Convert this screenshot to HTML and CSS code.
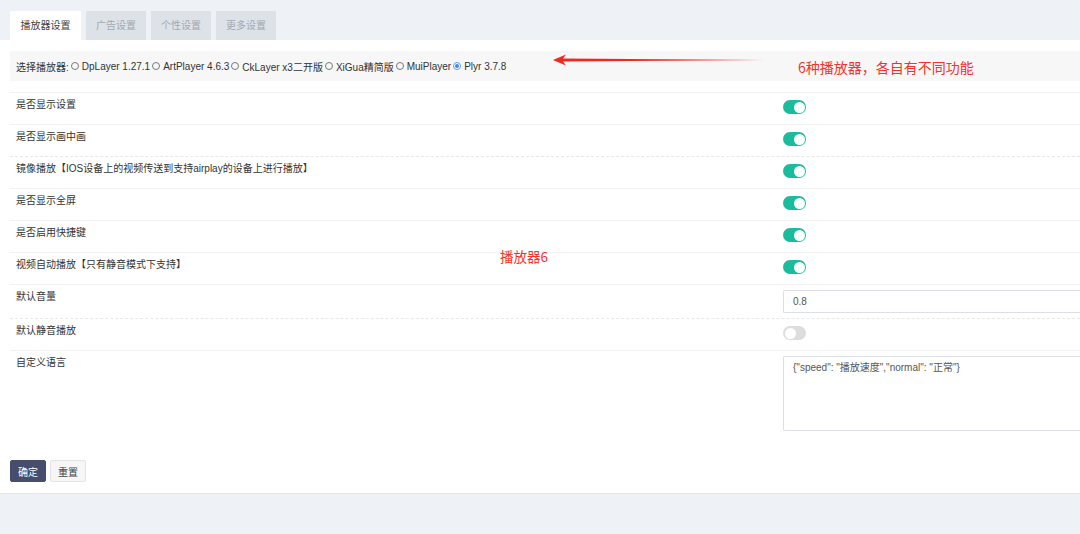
FILE: index.html
```html
<!DOCTYPE html>
<html lang="zh">
<head>
<meta charset="utf-8">
<title>播放器设置</title>
<link rel="stylesheet" href="styles.css">
</head>
<body>
<div class="page">
  <nav class="tabs">
    <div class="tab active">播放器设置</div>
    <div class="tab">广告设置</div>
    <div class="tab">个性设置</div>
    <div class="tab">更多设置</div>
  </nav>
  <main class="panel">
    <div class="player-row">
      <span>选择播放器:</span>
      <span class="opt"><i class="radio"></i>DpLayer 1.27.1</span>
      <span class="opt"><i class="radio"></i>ArtPlayer 4.6.3</span>
      <span class="opt"><i class="radio"></i>CkLayer x3二开版</span>
      <span class="opt"><i class="radio"></i>XiGua精简版</span>
      <span class="opt"><i class="radio"></i>MuiPlayer</span>
      <span class="opt"><i class="radio checked"></i>Plyr 3.7.8</span>
    </div>
    <div class="rows">
      <div class="row"><div class="label">是否显示设置</div><div class="ctrl"><span class="switch on"></span></div></div>
      <div class="row"><div class="label">是否显示画中画</div><div class="ctrl"><span class="switch on"></span></div></div>
      <div class="row dashed"><div class="label">镜像播放【IOS设备上的视频传送到支持airplay的设备上进行播放】</div><div class="ctrl"><span class="switch on"></span></div></div>
      <div class="row"><div class="label">是否显示全屏</div><div class="ctrl"><span class="switch on"></span></div></div>
      <div class="row"><div class="label">是否启用快捷键</div><div class="ctrl"><span class="switch on"></span></div></div>
      <div class="row"><div class="label">视频自动播放【只有静音模式下支持】</div><div class="ctrl"><span class="switch on"></span></div></div>
      <div class="row"><div class="label">默认音量</div><div class="ctrl"><div class="input">0.8</div></div></div>
      <div class="row dashed"><div class="label">默认静音播放</div><div class="ctrl"><span class="switch"></span></div></div>
      <div class="row last"><div class="label">自定义语言</div><div class="ctrl"><div class="textarea">{"speed": "播放速度","normal": "正常"}</div></div></div>
    </div>
    <div class="actions">
      <button class="btn primary">确定</button>
      <button class="btn">重置</button>
    </div>
    <svg class="arrow" width="226" height="12" viewBox="0 0 226 12">
      <polygon points="0,6 13,0.5 10,4.5 226,6 10,7.5 13,11.5" fill="#f0281e"/>
    </svg>
    <div class="note note-top">6种播放器，各自有不同功能</div>
    <div class="note note-mid">播放器6</div>
  </main>
</div>
</body>
</html>
```
FILE: styles.css
```css
html, body {
  margin: 0;
  padding: 0;
  overflow: hidden;
}
body {
  background: #eef1f5;
  font-family: "Liberation Sans", "Noto Sans CJK SC", sans-serif;
  font-size: 10px;
  color: #333;
  width: 1080px;
  height: 534px;
}
.tabs {
  display: flex;
  gap: 5px;
  padding: 11px 0 0 10px;
  height: 29px;
}
.tab {
  width: 60px;
  height: 29px;
  line-height: 29px;
  text-align: center;
  background: #dde2e8;
  color: #a3a8ae;
}
.tab.active {
  width: 71px;
  background: #fff;
  color: #444;
}
.panel {
  position: relative;
  background: #fff;
  height: 454px;
  box-sizing: border-box;
  padding: 10px 0 0 10px;
  border-bottom: 1px solid #e2e6ea;
}
.player-row {
  display: flex;
  align-items: center;
  height: 30px;
  background: #f7f7f7;
  padding-left: 6px;
  color: #333;
  white-space: nowrap;
  margin-top: 1px;
}
.opt {
  display: flex;
  align-items: center;
}
.radio {
  display: inline-block;
  width: 6px;
  height: 6px;
  border: 1px solid #7a7a7a;
  border-radius: 50%;
  margin: 0 3px 0 2px;
  position: relative;
}
.radio.checked {
  border-color: #5a9ee8;
  background: #fff;
}
.radio.checked::after {
  content: "";
  position: absolute;
  left: 1px;
  top: 1px;
  width: 4px;
  height: 4px;
  border-radius: 50%;
  background: #3b8ae6;
}
.rows {
  margin-top: 11px;
}
.row {
  display: grid;
  grid-template-columns: 773px 310px;
  min-height: 32px;
  box-sizing: border-box;
  border-top: 1px solid #f1f2f3;
  padding: 5px 0;
}
.row.dashed {
  border-top: 1px dashed #e8e8e8;
}
.label {
  padding-left: 6px;
  line-height: 14px;
  color: #333;
}
.ctrl {
  display: flex;
  align-items: flex-start;
}
.switch {
  position: relative;
  display: block;
  width: 23px;
  height: 14px;
  margin-top: 2px;
  border-radius: 7px;
  background: #ddd;
}
.switch::after {
  content: "";
  position: absolute;
  top: 1.5px;
  left: 1.5px;
  width: 11px;
  height: 11px;
  border-radius: 50%;
  background: #fff;
}
.switch.on {
  background: #1abc9c;
}
.switch.on::after {
  left: 10.5px;
}
.input {
  width: 310px;
  height: 23px;
  box-sizing: border-box;
  border: 1px solid #dcdfe6;
  border-right: none;
  border-radius: 2px 0 0 2px;
  line-height: 21px;
  padding-left: 9px;
  color: #555;
}
.textarea {
  width: 310px;
  height: 75px;
  box-sizing: border-box;
  border: 1px solid #dcdfe6;
  border-right: none;
  border-radius: 2px 0 0 2px;
  padding: 4px 9px;
  line-height: 14px;
  color: #555;
}
.row.last {
  min-height: 86px;
}
.actions {
  display: flex;
  gap: 4px;
  margin-top: 24px;
}
.btn {
  height: 22px;
  padding: 0;
  width: 36px;
  font-family: "Liberation Sans", "Noto Sans CJK SC", sans-serif;
  font-size: 10px;
  border-radius: 2px;
  border: 1px solid #e4e4e4;
  background: #f6f6f6;
  color: #444;
}
.btn.primary {
  background: #474d6c;
  border-color: #474d6c;
  color: #fff;
}
.arrow {
  position: absolute;
  left: 553px;
  top: 14px;
}
.note {
  position: absolute;
  color: #f4332a;
  font-family: "Noto Sans CJK SC", sans-serif;
  white-space: nowrap;
}
.note-top {
  left: 798px;
  top: 17px;
  font-size: 14px;
  line-height: 20px;
}
.note-mid {
  left: 500px;
  top: 206px;
  font-size: 13.5px;
  line-height: 20px;
}
```
